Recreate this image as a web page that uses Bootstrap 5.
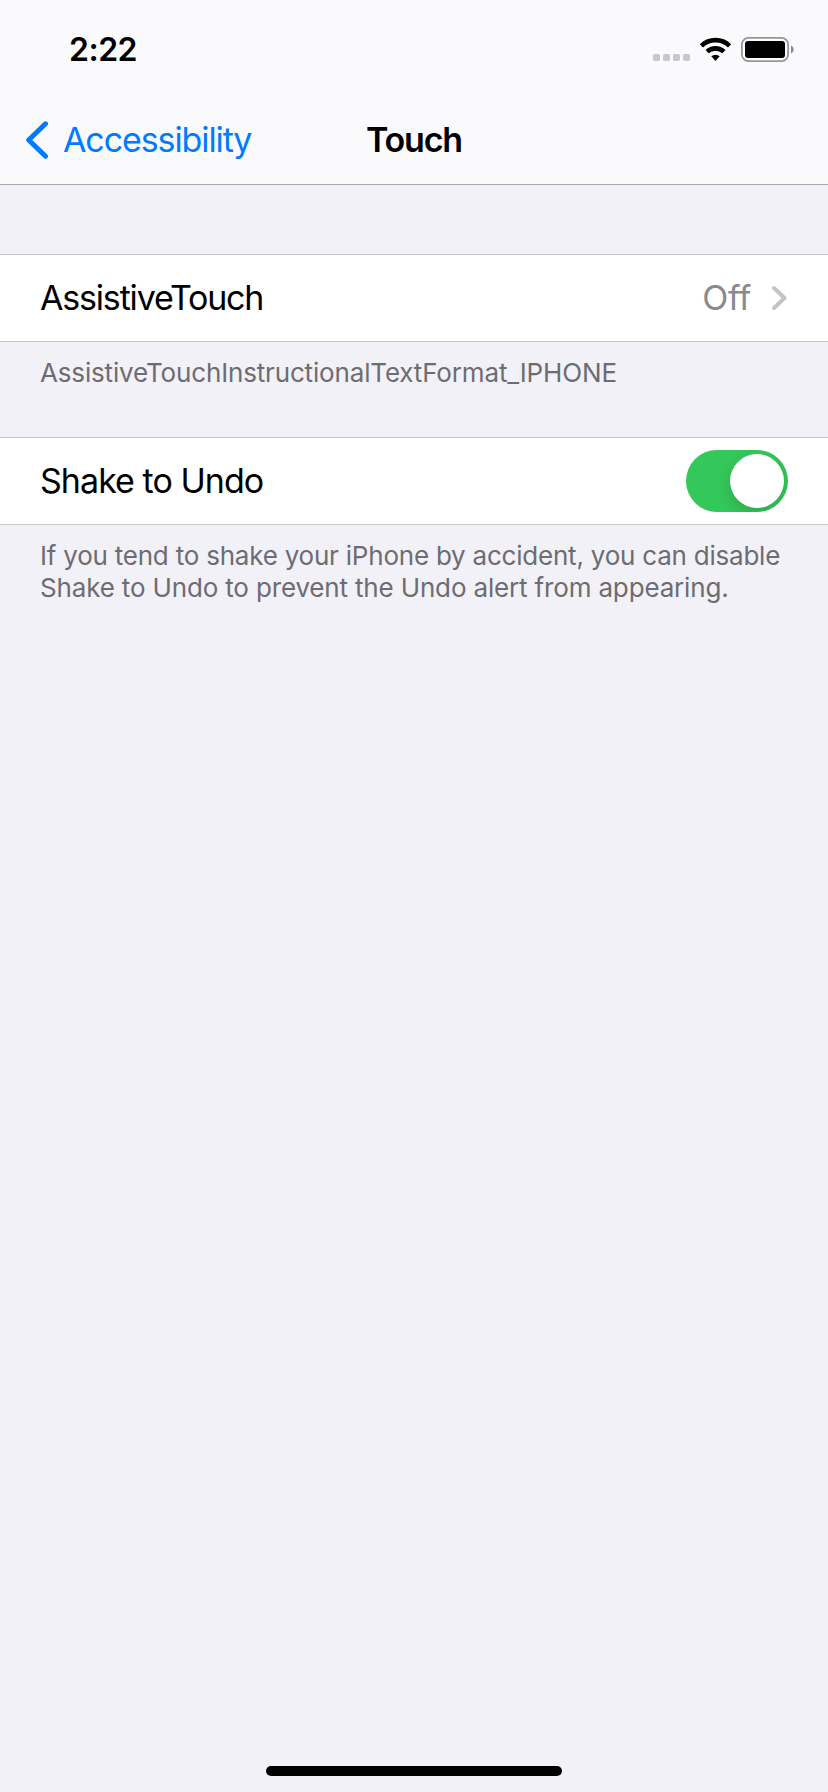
<!DOCTYPE html>
<html lang="en">
<head>
<meta charset="utf-8">
<meta name="viewport" content="width=device-width, initial-scale=1">
<title>Touch</title>
<link href="https://cdn.jsdelivr.net/npm/bootstrap@5.3.0/dist/css/bootstrap.min.css" rel="stylesheet">
<style>
body{font-family:Inter,"Liberation Sans",sans-serif;background:#f2f1f7;color:#000;height:1792px}
svg{display:block;flex:none}
.top-area{height:185px;background:#fafafd;border-bottom:1px solid #a9a9ae}
.status-row{height:100px;padding:0 33px 0 69px}
.status-icons{margin-bottom:2px}
.clock{font-size:32px;font-weight:600;line-height:40px;letter-spacing:-.5px}
.nav-row{height:80px;display:grid;grid-template-columns:1fr auto 1fr;align-items:center;padding:0 25px}
.back-link{color:#007aff;font-size:34px;line-height:40px;letter-spacing:-1.1px;gap:14px}
.page-title{font-size:34px;font-weight:600;line-height:40px;letter-spacing:-1.2px}
.group-one{margin-top:69px}
.group-two{margin-top:47px}
.setting{height:88px;border:solid #c6c5ca;border-width:1px 0;background:#fff;padding:0 40px;font-size:34px;line-height:40px}
.tight{letter-spacing:-1.18px}
.semi-tight{letter-spacing:-.95px}
.note{font-size:26px;line-height:32px;color:#6d6c72;letter-spacing:-.16px;padding:15px 40px 1px;white-space:nowrap}
.note-first-line{letter-spacing:-.22px}
.value{color:#8a8a8e;letter-spacing:-.4px;margin-right:20px}
.switch-track{width:102px;height:62px;border-radius:31px;background:#34c759;padding:4px;overflow:hidden}
.switch-knob{width:54px;height:54px;border-radius:50%;background:#fff;box-shadow:0 5px 14px rgba(0,0,0,.15)}
.home-bar{width:296px;height:10px;border-radius:5px;background:#000;margin-bottom:16px}
</style>
</head>
<body class="d-flex flex-column">
<header class="top-area">
<div class="status-row d-flex align-items-center justify-content-between">
<span class="clock">2:22</span>
<svg class="status-icons" width="142" height="28" viewBox="653 35 142 28" aria-hidden="true">
<g fill="#c8c8cb"><rect x="653" y="54" width="7" height="7" rx="1.7"/><rect x="663" y="54" width="7" height="7" rx="1.7"/><rect x="673" y="54" width="7" height="7" rx="1.7"/><rect x="683" y="54" width="7" height="7" rx="1.7"/></g>
<g fill="none" stroke="#000" stroke-width="4.6"><path d="M701.4 45.8a20.4 20.4 0 0 1 28.2 0"/><path d="M707.1 51.7a12.2 12.2 0 0 1 16.8 0"/></g>
<path d="M711.3 56.3a6.3 6.3 0 0 1 8.4 0L715.5 61z"/>
<rect x="741.9" y="37.9" width="46.2" height="23.2" rx="6.6" fill="#fff" stroke="#96969a" stroke-width="1.8"/>
<rect x="745" y="41" width="40" height="17" rx="3"/>
<path d="M791 45.5c3.5 1.5 3.5 6.500 0 8z" fill="#8a8a8d"/>
</svg>
</div>
<div class="nav-row">
<a class="back-link d-flex align-items-center text-decoration-none" href="#"><svg width="24" height="40" viewBox="0 0 24 40" fill="none" stroke="#007aff" stroke-width="5" stroke-linecap="round" stroke-linejoin="round"><path d="M20.500 3.800 3.700 20l16.800 16.200"/></svg><span>Accessibility</span></a>
<h1 class="page-title m-0">Touch</h1>
</div>
</header>
<main class="flex-grow-1">
<section class="group-one">
<div class="setting d-flex align-items-center"><span class="tight">AssistiveTouch</span><span class="value ms-auto">Off</span><svg width="17" height="28" viewBox="0 0 17 28" fill="none" stroke="#c4c4c7" stroke-width="4" stroke-linecap="round" stroke-linejoin="round"><path d="M3 4l10.500 10L3 24"/></svg></div>
<div class="note">AssistiveTouchInstructionalTextFormat_IPHONE</div>
</section>
<section class="group-two">
<div class="setting d-flex align-items-center justify-content-between"><span class="semi-tight">Shake to Undo</span><div class="switch-track d-flex justify-content-end" role="switch" aria-checked="true" aria-label="Shake to Undo"><div class="switch-knob"></div></div></div>
<div class="note"><span class="note-first-line">If you tend to shake your iPhone by accident, you can disable</span><br>Shake to Undo to prevent the Undo alert from appearing.</div>
</section>
</main>
<div class="home-bar mx-auto"></div>
<script src="https://cdn.jsdelivr.net/npm/bootstrap@5.3.0/dist/js/bootstrap.bundle.min.js"></script>
</body>
</html>
